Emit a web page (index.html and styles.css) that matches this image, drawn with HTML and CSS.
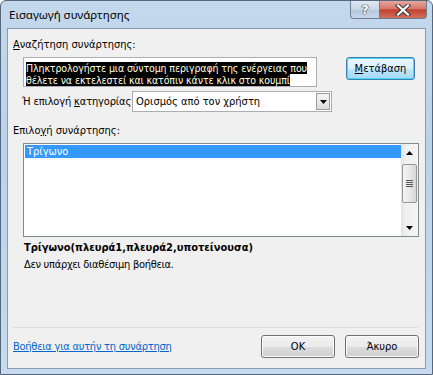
FILE: index.html
```html
<!DOCTYPE html>
<html lang="el">
<head>
<meta charset="utf-8">
<link rel="stylesheet" href="styles.css">
</head>
<body>
<div class="window">
  <div class="titlebar">
    <div class="title">Εισαγωγή συνάρτησης</div>
    <div class="tbtns">
      <div class="tb help">?</div>
      <div class="tb close"><svg width="16" height="12" viewBox="0 0 16 12"><path d="M3 1.5 L13 10.5 M13 1.5 L3 10.5" stroke="#3b3b3b" stroke-width="4.2" stroke-linecap="square"/><path d="M3 1.5 L13 10.5 M13 1.5 L3 10.5" stroke="#ffffff" stroke-width="2.2" stroke-linecap="square"/></svg></div>
    </div>
  </div>
  <div class="client">
    <div class="label"><u>Α</u>ναζήτηση συνάρτησης:</div>
    <div class="search-row">
      <div class="textarea">
        <span class="sel">Πληκτρολογήστε μια σύντομη περιγραφή της ενέργειας που</span><br>
        <span class="sel">θέλετε να εκτελεστεί και κατόπιν κάντε κλικ στο κουμπί</span>
      </div>
      <div class="btn go"><u>Μ</u>ετάβαση</div>
    </div>
    <div class="cat-row">
      <div class="cat-label">Ή επιλογή <u>κ</u>ατηγορίας</div>
      <div class="select">
        <div class="select-val">Ορισμός από τον χρήστη</div>
        <div class="select-btn"><svg width="7" height="4" viewBox="0 0 7 4"><path d="M0 0 H7 L3.5 4 Z" fill="#000"/></svg></div>
      </div>
    </div>
    <div class="label lbl2">Επιλο<u>γ</u>ή συνάρτησης:</div>
    <div class="listbox">
      <div class="items">
        <div class="item selected">Τρίγωνο</div>
      </div>
      <div class="scrollbar">
        <div class="arrow"><svg width="7" height="4" viewBox="0 0 7 4"><path d="M0 4 H7 L3.5 0 Z" fill="#000"/></svg></div>
        <div class="track">
          <div class="thumb"><div class="grip"><i></i><i></i><i></i><i></i></div></div>
        </div>
        <div class="arrow"><svg width="7" height="4" viewBox="0 0 7 4"><path d="M0 0 H7 L3.5 4 Z" fill="#000"/></svg></div>
      </div>
    </div>
    <div class="sig">Τρίγωνο(πλευρά1,πλευρά2,υποτείνουσα)</div>
    <div class="desc">Δεν υπάρχει διαθέσιμη βοήθεια.</div>
    <div class="spacer"></div>
    <div class="sep"></div>
    <div class="footer">
      <a class="link" href="#">Βοήθεια για αυτήν τη συνάρτηση</a>
      <div class="btns">
        <div class="btn">ΟΚ</div>
        <div class="btn">Άκυρο</div>
      </div>
    </div>
  </div>
</div>
</body>
</html>
```
FILE: styles.css
```css
html, body {
  margin: 0;
  padding: 0;
}
body {
  width: 433px;
  height: 375px;
  overflow: hidden;
  font-family: "DejaVu Sans Condensed", "DejaVu Sans", sans-serif;
  font-size: 11px;
  color: #000;
}
.window {
  box-sizing: border-box;
  width: 433px;
  height: 375px;
  border: 1px solid #54677d;
  border-radius: 6px 6px 0 0;
  background: linear-gradient(180deg, #c4d8ec 0%, #bcd2e9 40%, #c7dbee 100%);
  display: flex;
  flex-direction: column;
}
.titlebar {
  height: 27px;
  display: flex;
  justify-content: space-between;
  align-items: flex-start;
}
.title {
  font-family: "Noto Sans", "Open Sans", sans-serif;
  font-size: 11.5px;
  padding: 6px 0 0 8px;
  color: #000;
}
.tbtns {
  display: flex;
  margin-right: 5px;
}
.tb {
  height: 18px;
  box-sizing: border-box;
  border: 1px solid #6c7e94;
  border-top: none;
  display: flex;
  align-items: center;
  justify-content: center;
}
.help {
  width: 29px;
  border-radius: 0 0 0 4px;
  border-right: none;
  background: linear-gradient(180deg, #dfe8f2 0%, #c8d6e6 50%, #b4c6da 51%, #c8d8ea 100%);
  font-family: "DejaVu Sans", sans-serif;
  font-weight: bold;
  font-size: 13px;
  color: #fff;
  text-shadow: 0 0 1px #333, 0 0 1px #333, 0 0 1px #333;
}
.close {
  width: 48px;
  border-radius: 0 0 4px 0;
  background: linear-gradient(180deg, #e5a79d 0%, #d7786b 45%, #c1402f 52%, #d0705d 100%);
}
.client {
  flex: 1;
  margin: 0 6px 5px 6px;
  border: 1px solid #8a9bb0;
  background: #f0f0f0;
  padding: 9px 6px 0 5px;
  display: flex;
  flex-direction: column;
}
u { text-decoration: underline; }
.label {
  line-height: 13px;
}
.search-row {
  display: flex;
  align-items: flex-start;
  margin-top: 6px;
  margin-left: 10px;
}
.textarea {
  box-sizing: border-box;
  width: 294px;
  height: 30px;
  border: 1px solid #abadb3;
  background: #fff;
  padding: 4px 0 0 2px;
  line-height: 12px;
  font-size: 10.5px;
  letter-spacing: -0.1px;
  white-space: nowrap;
  overflow: hidden;
}
.sel {
  background: #000;
  color: #ffffe0;
}
.btn {
  box-sizing: border-box;
  width: 74px;
  height: 23px;
  border: 1px solid #707070;
  border-radius: 3px;
  background: linear-gradient(180deg, #f2f2f2 0%, #ebebeb 50%, #dddddd 51%, #cfcfcf 100%);
  display: flex;
  align-items: center;
  justify-content: center;
  box-shadow: inset 0 0 0 1px #fcfcfc;
}
.go {
  width: 69px;
  margin-left: 29px;
  border-color: #3c7fb1;
  box-shadow: inset 0 0 0 1px #48d8fb;
  background: linear-gradient(180deg, #eaf6fd 0%, #d9f0fc 50%, #bee6fd 51%, #a7d9f5 100%);
}
.cat-row {
  display: flex;
  align-items: center;
  margin-top: 4px;
  margin-left: 9px;
}
.cat-label {
  width: 110px;
  white-space: nowrap;
  letter-spacing: -0.15px;
}
.select {
  box-sizing: border-box;
  width: 200px;
  height: 21px;
  border: 1px solid #abadb3;
  background: #fff;
  display: flex;
  align-items: center;
  justify-content: space-between;
}
.select-val {
  padding-left: 3px;
}
.select-btn {
  box-sizing: border-box;
  width: 14px;
  height: 17px;
  margin-right: 1px;
  border: 1px solid #9a9a9a;
  background: linear-gradient(180deg, #f4f4f4, #dcdcdc);
  display: flex;
  align-items: center;
  justify-content: center;
}
.lbl2 {
  margin-top: 12px;
}
.listbox {
  box-sizing: border-box;
  margin-top: 6px;
  margin-left: 10px;
  width: 396px;
  height: 94px;
  border: 1px solid #828790;
  background: #fff;
  display: flex;
}
.items {
  flex: 1;
  padding: 1px 0 0 1px;
}
.item {
  height: 13px;
  line-height: 13px;
  padding-left: 2px;
}
.selected {
  background: #3399ff;
  color: #fff;
}
.scrollbar {
  width: 17px;
  background: linear-gradient(90deg, #e3e3e3, #f0f0f0 30%, #f4f4f4);
  display: flex;
  flex-direction: column;
}
.arrow {
  height: 17px;
  display: flex;
  align-items: center;
  justify-content: center;
}
.track {
  flex: 1;
  padding-top: 3px;
}
.thumb {
  box-sizing: border-box;
  margin: 0 1px;
  height: 39px;
  border: 1px solid #979797;
  border-radius: 2px;
  background: linear-gradient(90deg, #f3f3f3, #e8e8e8 50%, #d6d6d6);
  display: flex;
  align-items: center;
  justify-content: center;
}
.grip {
  display: flex;
  flex-direction: column;
  gap: 1px;
}
.grip i {
  display: block;
  width: 7px;
  height: 1px;
  background: #555;
}
.sig {
  margin-top: 4px;
  margin-left: 11px;
  font-weight: bold;
  line-height: 14px;
}
.desc {
  margin-top: 3px;
  margin-left: 11px;
  line-height: 14px;
  letter-spacing: -0.3px;
}
.spacer { flex: 1; }
.sep {
  height: 1px;
  background: #d5dfe5;
  margin-right: 1px;
}
.footer {
  display: flex;
  justify-content: space-between;
  align-items: center;
  height: 36px;
  padding-bottom: 4px;
}
.link {
  color: #0066cc;
  text-decoration: underline;
  letter-spacing: -0.25px;
}
.btns {
  display: flex;
  gap: 10px;
}
```
